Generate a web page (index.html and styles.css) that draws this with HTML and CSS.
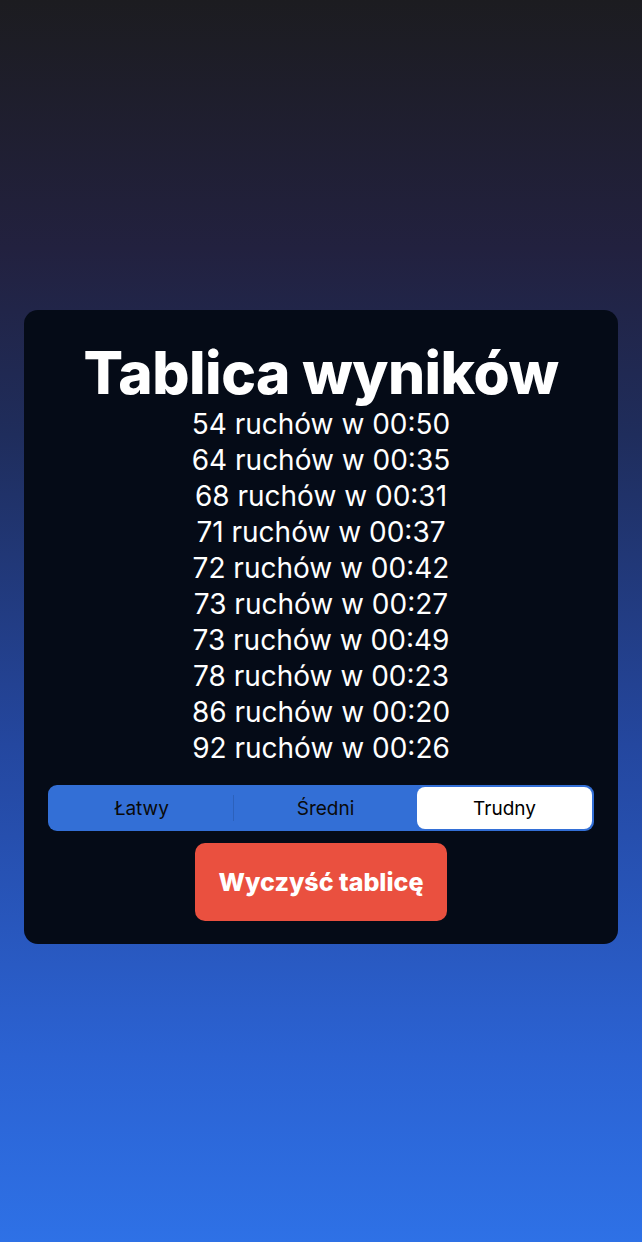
FILE: index.html
```html
<!DOCTYPE html>
<html lang="pl">
<head>
<meta charset="utf-8">
<title>Tablica wyników</title>
<link rel="stylesheet" href="styles.css">
</head>
<body>
<main class="screen">
  <section class="card">
    <h1 class="title">Tablica wyników</h1>
    <ul class="scores">
      <li>54 ruchów w 00:50</li>
      <li>64 ruchów w 00:35</li>
      <li>68 ruchów w 00:31</li>
      <li>71 ruchów w 00:37</li>
      <li>72 ruchów w 00:42</li>
      <li>73 ruchów w 00:27</li>
      <li>73 ruchów w 00:49</li>
      <li>78 ruchów w 00:23</li>
      <li>86 ruchów w 00:20</li>
      <li>92 ruchów w 00:26</li>
    </ul>
    <div class="segmented">
      <div class="seg">Łatwy</div>
      <div class="divider"></div>
      <div class="seg">Średni</div>
      <div class="seg selected">Trudny</div>
    </div>
    <button class="clear">Wyczyść tablicę</button>
  </section>
</main>
</body>
</html>
```
FILE: styles.css
```css
* { box-sizing: border-box; }
html, body { margin: 0; padding: 0; }
body {
  width: 642px;
  height: 1242px;
  font-family: Inter, "Noto Sans", sans-serif;
  background: linear-gradient(180deg, #1c1c20 0%, #22213f 20%, #1f2d5c 35%, #24479f 60%, #2b62d2 85%, #2e71e6 100%);
}
.screen {
  height: 1242px;
  display: flex;
  justify-content: center;
  padding-top: 310px;
}
.card {
  width: 594px;
  height: 634px;
  background: #050b17;
  border-radius: 14px;
  display: flex;
  flex-direction: column;
  align-items: center;
  padding-top: 30px;
}
.title {
  margin: 0;
  color: #fff;
  font-weight: 800;
  font-size: 58.5px;
  line-height: 66px;
  letter-spacing: -0.5px;
}
.scores {
  list-style: none;
  margin: 0;
  padding: 0;
  color: #fff;
  font-size: 28px;
  line-height: 36px;
  text-align: center;
}
.segmented {
  margin-top: 19px;
  width: 546px;
  height: 46px;
  background: #336fd6;
  border-radius: 9px;
  display: flex;
  align-items: center;
  padding: 2px;
}
.seg {
  flex: 1;
  height: 42px;
  display: flex;
  align-items: center;
  justify-content: center;
  font-size: 19px;
  color: #0a0a0a;
}
.divider {
  width: 1px;
  height: 26px;
  background: rgba(0,0,0,0.12);
}
.seg.selected {
  flex: 0 0 175px;
  background: #fff;
  border-radius: 8px;
  color: #000;
}
.clear {
  margin-top: 12px;
  width: 252px;
  height: 78px;
  border: none;
  border-radius: 10px;
  background: #ea503f;
  color: #fff;
  font-family: Inter, "Noto Sans", sans-serif;
  font-weight: 800;
  font-size: 25px;
}
```
